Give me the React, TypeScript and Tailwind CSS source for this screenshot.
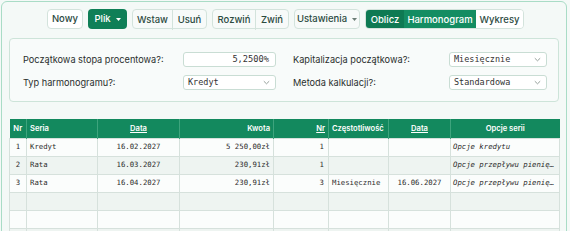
import React from "react";

const ui = { fontFamily: "Inter, 'Noto Sans', sans-serif" };
const mono = { fontFamily: "'DejaVu Sans Mono', 'Liberation Mono', monospace" };

function Chevron() {
  return (
    <svg width="7" height="5" viewBox="0 0 7 5" className="shrink-0">
      <path d="M0.8 1.2 L3.5 3.8 L6.2 1.2" fill="none" stroke="#8a9590" strokeWidth="0.9" />
    </svg>
  );
}

function Caret({ color }: { color: string }) {
  return (
    <svg width="5" height="3" viewBox="0 0 5 3" className="ml-[5px] shrink-0">
      <path d="M0 0 L5 0 L2.5 3 Z" fill={color} />
    </svg>
  );
}

function Select({ value, w }: { value: string; w: string }) {
  return (
    <div
      className={`${w} h-[15px] flex items-center justify-between pl-[4px] pr-[5px] bg-white border border-[#c9ddd4] rounded-[3px] text-[8.5px] font-medium text-[#333]`}
      style={mono}
    >
      <span>{value}</span>
      <Chevron />
    </div>
  );
}

const rows = [
  { nr: "1", seria: "Kredyt", data: "16.02.2027", kwota: "5 250,00zł", n: "1", cz: "", d2: "", op: "Opcje kredytu" },
  { nr: "2", seria: "Rata", data: "16.03.2027", kwota: "230,91zł", n: "1", cz: "", d2: "", op: "Opcje przepływu pienię…" },
  { nr: "3", seria: "Rata", data: "16.04.2027", kwota: "230,91zł", n: "3", cz: "Miesięcznie", d2: "16.06.2027", op: "Opcje przepływu pienię…" },
  { nr: "", seria: "", data: "", kwota: "", n: "", cz: "", d2: "", op: "" },
  { nr: "", seria: "", data: "", kwota: "", n: "", cz: "", d2: "", op: "" },
  { nr: "", seria: "", data: "", kwota: "", n: "", cz: "", d2: "", op: "" },
];

export default function App() {
  const btn = "h-[20px] flex items-center justify-center text-[9.5px] font-medium text-[#2c4a3f]";
  return (
    <div className="w-[570px] h-[231px] overflow-hidden bg-[#f4f9f7] pt-[1px] pl-[1px]" style={ui}>
      <div className="w-[566px] h-[300px] border border-[#a9dcc6] rounded-[6px] bg-[#f4f9f7] pt-[7px] px-[7px]">
        {/* Toolbar */}
        <div className="flex items-center pl-[38px] gap-[5px]">
          <div className={`${btn} w-[36px] bg-white border border-[#d3e3dc] rounded-[4px]`}>Nowy</div>
          <div className={`${btn} w-[39px] bg-[#0f7f57] text-white rounded-[4px]`}>
            Plik
            <Caret color="#ffffff" />
          </div>
          <div className="flex h-[20px] bg-[#f7faf9] border border-[#d3e3dc] rounded-[4px]">
            <div className={`${btn} h-[18px] w-[40px] border-r border-[#d3e3dc]`}>Wstaw</div>
            <div className={`${btn} h-[18px] w-[33px]`}>Usuń</div>
          </div>
          <div className="flex h-[20px] bg-[#f7faf9] border border-[#d3e3dc] rounded-[4px]">
            <div className={`${btn} h-[18px] w-[43px] border-r border-[#d3e3dc]`}>Rozwiń</div>
            <div className={`${btn} h-[18px] w-[32px]`}>Zwiń</div>
          </div>
          <div className={`${btn} w-[66px] bg-[#f7faf9] border border-[#d3e3dc] rounded-[4px]`}>
            Ustawienia
            <Caret color="#6b7c75" />
          </div>
          <div className="flex h-[20px] rounded-[4px] overflow-hidden border border-[#d3e3dc]">
            <div className={`${btn} h-[18px] w-[38px] bg-[#0e7a53] text-white`}>Oblicz</div>
            <div className={`${btn} h-[18px] w-[72px] bg-[#148d62] text-white`}>Harmonogram</div>
            <div className={`${btn} h-[18px] w-[47px] bg-white`}>Wykresy</div>
          </div>
        </div>

        {/* Settings panel */}
        <div className="mt-[9px] w-[550px] h-[64px] bg-[#f8fbfa] border border-[#cde4d9] rounded-[4px] pt-[13px] pl-[13px] flex flex-col gap-[8px] text-[9.2px] text-[#2a2f2d]">
          <div className="flex items-center h-[15px]">
            <div className="w-[160px]">Początkowa stopa procentowa?:</div>
            <div
              className="w-[93px] h-[15px] flex items-center justify-end pr-[6px] bg-white border border-[#c9ddd4] rounded-[3px] text-[8.7px] text-[#333]"
              style={mono}
            >
              5,2500%
            </div>
            <div className="w-[17px]" />
            <div className="w-[156px]">Kapitalizacja początkowa?:</div>
            <Select value="Miesięcznie" w="w-[98px]" />
          </div>
          <div className="flex items-center h-[15px]">
            <div className="w-[160px]">Typ harmonogramu?:</div>
            <Select value="Kredyt" w="w-[93px]" />
            <div className="w-[17px]" />
            <div className="w-[156px]">Metoda kalkulacji?:</div>
            <Select value="Standardowa" w="w-[98px]" />
          </div>
        </div>

        {/* Table */}
        <table className="mt-[17px] w-[550px] table-fixed border-collapse text-[7.3px] text-[#2b2b2b]">
          <colgroup>
            <col className="w-[17px]" />
            <col className="w-[71px]" />
            <col className="w-[82px]" />
            <col className="w-[94px]" />
            <col className="w-[55px]" />
            <col className="w-[60px]" />
            <col className="w-[62px]" />
            <col className="w-[109px]" />
          </colgroup>
          <thead>
            <tr className="h-[19px] bg-[#13895e] text-white text-[7.6px] font-semibold">
              <th className="border-r border-[#3ea47d] text-center font-semibold">Nr</th>
              <th className="border-r border-[#3ea47d] text-left pl-[3px] font-semibold">Seria</th>
              <th className="border-r border-[#3ea47d] text-center font-semibold underline">Data</th>
              <th className="border-r border-[#3ea47d] text-right pr-[3px] font-semibold">Kwota</th>
              <th className="border-r border-[#3ea47d] text-right pr-[3px] font-semibold underline">Nr</th>
              <th className="border-r border-[#3ea47d] text-left pl-[3px] font-semibold">Częstotliwość</th>
              <th className="border-r border-[#3ea47d] text-center font-semibold underline">Data</th>
              <th className="text-center font-semibold">Opcje serii</th>
            </tr>
          </thead>
          <tbody style={mono}>
            {rows.map((r, i) => (
              <tr key={i} className={`h-[18px] ${i % 2 === 0 ? "bg-[#fbfdfc]" : "bg-[#eef4f1]"}`}>
                <td className="border border-[#d6e1dc] text-center">{r.nr}</td>
                <td className="border border-[#d6e1dc] pl-[3px]">{r.seria}</td>
                <td className="border border-[#d6e1dc] text-center">{r.data}</td>
                <td className="border border-[#d6e1dc] text-right pr-[3px]">{r.kwota}</td>
                <td className="border border-[#d6e1dc] text-right pr-[4px]">{r.n}</td>
                <td className="border border-[#d6e1dc] pl-[3px]">{r.cz}</td>
                <td className="border border-[#d6e1dc] text-center">{r.d2}</td>
                <td className="border border-[#d6e1dc] pl-[2px] italic whitespace-nowrap">{r.op}</td>
              </tr>
            ))}
          </tbody>
        </table>
      </div>
    </div>
  );
}
